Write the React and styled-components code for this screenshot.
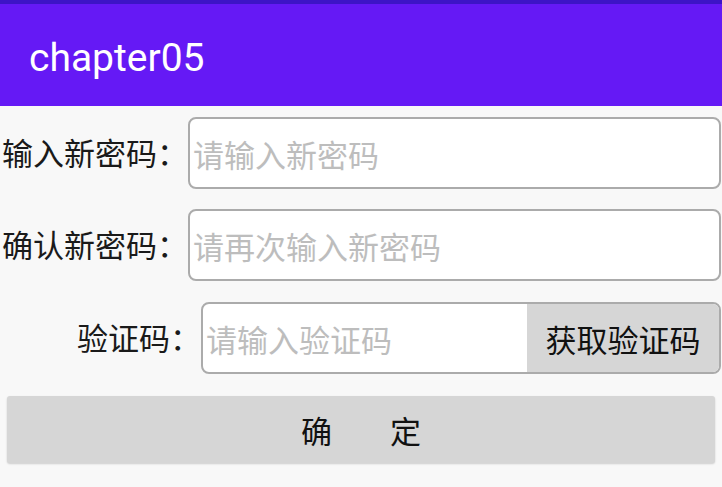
import styled, { createGlobalStyle } from 'styled-components';

const GlobalStyle = createGlobalStyle`
  body {
    margin: 0;
    background: #f8f8f8;
    font-family: "Noto Sans CJK SC", "Noto Sans", sans-serif;
  }
`;

const App = () => {
  return (
    <Page>
      <GlobalStyle />
      <StatusStrip />
      <AppBar>
        <Title>chapter05</Title>
      </AppBar>
      <Form>
        <Row $top={11}>
          <Label>输入新密码：</Label>
          <InputBox>
            <Field placeholder='请输入新密码' />
          </InputBox>
        </Row>
        <Row $top={20}>
          <Label>确认新密码：</Label>
          <InputBox>
            <Field placeholder='请再次输入新密码' />
          </InputBox>
        </Row>
        <Row $top={21} $indent={77}>
          <Label>验证码：</Label>
          <InputBox>
            <Field placeholder='请输入验证码' />
            <CodeButton>获取验证码</CodeButton>
          </InputBox>
        </Row>
        <ConfirmButton>
          <span>确</span>
          <span>定</span>
        </ConfirmButton>
      </Form>
    </Page>
  );
};
export default App;

const Page = styled.div`
  width: 722px;
  min-height: 487px;
  background: #f8f8f8;
`;

const StatusStrip = styled.div`
  height: 4px;
  background: #3d14c6;
`;

const AppBar = styled.header`
  height: 102px;
  box-sizing: border-box;
  padding: 6px 0 0 29px;
  background: #6519f5;
  display: flex;
  align-items: center;
`;

const Title = styled.h1`
  margin: 0;
  color: #fff;
  font-family: Roboto, sans-serif;
  font-weight: 400;
  font-size: 39px;
  letter-spacing: 0;
`;

const Form = styled.div`
  display: flex;
  flex-direction: column;
`;

const Row = styled.div`
  display: flex;
  align-items: center;
  margin-top: ${(p) => p.$top}px;
  padding-left: ${(p) => p.$indent || 2}px;
  padding-right: 1px;
`;

const Label = styled.span`
  font-size: 31px;
  color: #1a1a1a;
  white-space: nowrap;
  line-height: 1;
  margin-top: -4px;
`;

const InputBox = styled.div`
  flex: 1;
  height: 72px;
  box-sizing: border-box;
  border: 2px solid #ababab;
  border-radius: 8px;
  background: #fff;
  display: flex;
  overflow: hidden;
`;

const Field = styled.input`
  flex: 1;
  min-width: 0;
  border: none;
  outline: none;
  background: transparent;
  padding: 0 0 0 3px;
  font-family: "Noto Sans CJK SC", sans-serif;
  font-size: 31px;
  color: #222;

  &::placeholder {
    color: #bdbdbd;
  }
`;

const CodeButton = styled.button`
  width: 192px;
  border: none;
  background: #d6d6d6;
  font-family: "Noto Sans CJK SC", sans-serif;
  font-size: 31px;
  color: #111;
  padding: 0;
`;

const ConfirmButton = styled.button`
  margin: 22px 7px 0 7px;
  height: 67px;
  border: none;
  border-radius: 3px;
  background: #d6d6d6;
  box-shadow: 0 1px 2px rgba(0, 0, 0, 0.18);
  display: flex;
  justify-content: center;
  align-items: center;
  gap: 58px;
  font-family: "Noto Sans CJK SC", sans-serif;
  font-size: 31px;
  color: #111;
`;
